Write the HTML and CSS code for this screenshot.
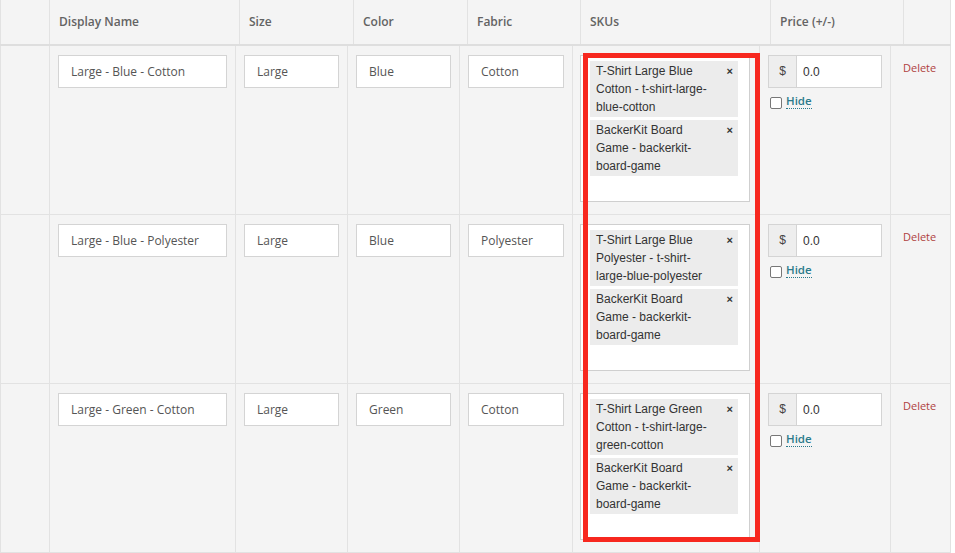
FILE: index.html
```html
<!DOCTYPE html>
<html lang="en">
<head>
    <meta charset="UTF-8">
    <title>Variants</title>
    <link rel="stylesheet" href="styles.css">
</head>
<body>
    <div class="variants">
        <div class="variants-head">
            <div class="th"></div>
            <div class="th">Display Name</div>
            <div class="th">Size</div>
            <div class="th">Color</div>
            <div class="th">Fabric</div>
            <div class="th">SKUs</div>
            <div class="th">Price (+/-)</div>
            <div class="th"></div>
        </div>

        <!-- row 1 -->
        <div class="variant-row">
            <div class="td"></div>
            <div class="td"><input class="field" type="text" value="Large - Blue - Cotton"></div>
            <div class="td"><input class="field" type="text" value="Large"></div>
            <div class="td"><input class="field" type="text" value="Blue"></div>
            <div class="td"><input class="field" type="text" value="Cotton"></div>
            <div class="td">
                <div class="sku-box">
                    <div class="chip"><span class="chip-text">T-Shirt Large Blue Cotton - t-shirt-large-blue-cotton</span><span class="chip-x">×</span></div>
                    <div class="chip"><span class="chip-text">BackerKit Board Game - backerkit-board-game</span><span class="chip-x">×</span></div>
                </div>
            </div>
            <div class="td">
                <div class="price">
                    <span class="price-addon">$</span>
                    <input class="price-input" type="text" value="0.0">
                </div>
                <label class="hide"><span class="check"></span><span class="hide-link">Hide</span></label>
            </div>
            <div class="td td-delete"><a class="delete" href="#">Delete</a></div>
        </div>

        <!-- row 2 -->
        <div class="variant-row">
            <div class="td"></div>
            <div class="td"><input class="field" type="text" value="Large - Blue - Polyester"></div>
            <div class="td"><input class="field" type="text" value="Large"></div>
            <div class="td"><input class="field" type="text" value="Blue"></div>
            <div class="td"><input class="field" type="text" value="Polyester"></div>
            <div class="td">
                <div class="sku-box">
                    <div class="chip"><span class="chip-text">T-Shirt Large Blue Polyester - t-shirt-large-blue-polyester</span><span class="chip-x">×</span></div>
                    <div class="chip"><span class="chip-text">BackerKit Board Game - backerkit-board-game</span><span class="chip-x">×</span></div>
                </div>
            </div>
            <div class="td">
                <div class="price">
                    <span class="price-addon">$</span>
                    <input class="price-input" type="text" value="0.0">
                </div>
                <label class="hide"><span class="check"></span><span class="hide-link">Hide</span></label>
            </div>
            <div class="td td-delete"><a class="delete" href="#">Delete</a></div>
        </div>

        <!-- row 3 -->
        <div class="variant-row">
            <div class="td"></div>
            <div class="td"><input class="field" type="text" value="Large - Green - Cotton"></div>
            <div class="td"><input class="field" type="text" value="Large"></div>
            <div class="td"><input class="field" type="text" value="Green"></div>
            <div class="td"><input class="field" type="text" value="Cotton"></div>
            <div class="td">
                <div class="sku-box">
                    <div class="chip"><span class="chip-text">T-Shirt Large Green Cotton - t-shirt-large-green-cotton</span><span class="chip-x">×</span></div>
                    <div class="chip"><span class="chip-text">BackerKit Board Game - backerkit-board-game</span><span class="chip-x">×</span></div>
                </div>
            </div>
            <div class="td">
                <div class="price">
                    <span class="price-addon">$</span>
                    <input class="price-input" type="text" value="0.0">
                </div>
                <label class="hide"><span class="check"></span><span class="hide-link">Hide</span></label>
            </div>
            <div class="td td-delete"><a class="delete" href="#">Delete</a></div>
        </div>

        <!-- annotation drawn over the SKUs column -->
        <div class="highlight"></div>
    </div>
</body>
</html>
```

FILE: styles.css
```css
* {
    margin: 0;
    padding: 0;
    box-sizing: border-box;
}

body {
    font-family: 'Open Sans', 'Liberation Sans', sans-serif;
    background: #fff;
    color: #555;
    width: 955px;
    height: 553px;
    overflow: hidden;
}

.variants {
    position: relative;
    width: 951px;
    background: #f4f4f4;
}

.variants-head {
    display: grid;
    grid-template-columns: 49px 190px 114px 114px 113px 190px 133px 48px;
    height: 46px;
    border-bottom: 2px solid #dedede;
}

.th {
    border-left: 1px solid #e2e2e2;
    padding: 0 9px;
    font-size: 12px;
    font-weight: 600;
    color: #636363;
    line-height: 43px;
    white-space: nowrap;
}

.th:last-child {
    border-right: 1px solid #e2e2e2;
}

.variant-row {
    display: grid;
    grid-template-columns: 49px 186px 112px 112px 113px 187px 131px 61px;
    border-bottom: 1px solid #e2e2e2;
}

.td {
    border-left: 1px solid #e2e2e2;
    padding: 9px 8px 12px 8px;
}

.td:last-child {
    border-right: 1px solid #e2e2e2;
}

.field {
    display: block;
    width: 100%;
    height: 33px;
    border: 1px solid #d4d4d4;
    background: #fff;
    padding: 0 12px;
    font-family: 'Open Sans', sans-serif;
    font-size: 12px;
    color: #555;
    outline: none;
}

.sku-box {
    width: 170px;
    height: 147px;
    margin-left: -1px;
    background: #fff;
    border: 1px solid #cfcfcf;
    padding: 5px 11px 0 9px;
    font-family: 'Liberation Sans', Arial, sans-serif;
    font-size: 12px;
    line-height: 18px;
    color: #333;
}

.chip {
    display: flex;
    background: #ececec;
    padding: 1px 5px 1px 6px;
    margin-bottom: 3px;
}

.chip-text {
    width: 116px;
}

.chip-x {
    margin-left: auto;
    font-weight: bold;
    font-size: 11px;
    line-height: 18px;
}

.price {
    display: flex;
    height: 33px;
    border: 1px solid #d4d4d4;
    background: #fff;
}

.price-addon {
    width: 28px;
    background: #eee;
    border-right: 1px solid #d4d4d4;
    text-align: center;
    line-height: 31px;
    font-family: 'Liberation Sans', Arial, sans-serif;
    font-size: 12px;
    color: #444;
}

.price-input {
    flex: 1;
    min-width: 0;
    border: none;
    padding: 0 6px;
    font-family: 'Liberation Sans', Arial, sans-serif;
    font-size: 12px;
    color: #333;
    outline: none;
}

.hide {
    display: flex;
    align-items: flex-end;
    margin-top: 6px;
    margin-left: 2px;
}

.check {
    width: 12px;
    height: 12px;
    border: 1px solid #777;
    border-radius: 2px;
    background: #fff;
    margin-right: 4px;
    margin-bottom: 0;
}

.hide-link {
    font-size: 11.5px;
    font-weight: 600;
    color: #2b7a8b;
    line-height: 14px;
    border-bottom: 1px dotted #2b7a8b;
}

.td-delete {
    padding: 9px 4px 0 12px;
}

.delete {
    font-size: 11px;
    color: #b0413e;
    text-decoration: none;
    line-height: 16px;
}

.highlight {
    position: absolute;
    left: 583px;
    top: 53px;
    width: 177px;
    height: 489px;
    border: 5px solid #f7281f;
    pointer-events: none;
}
```
